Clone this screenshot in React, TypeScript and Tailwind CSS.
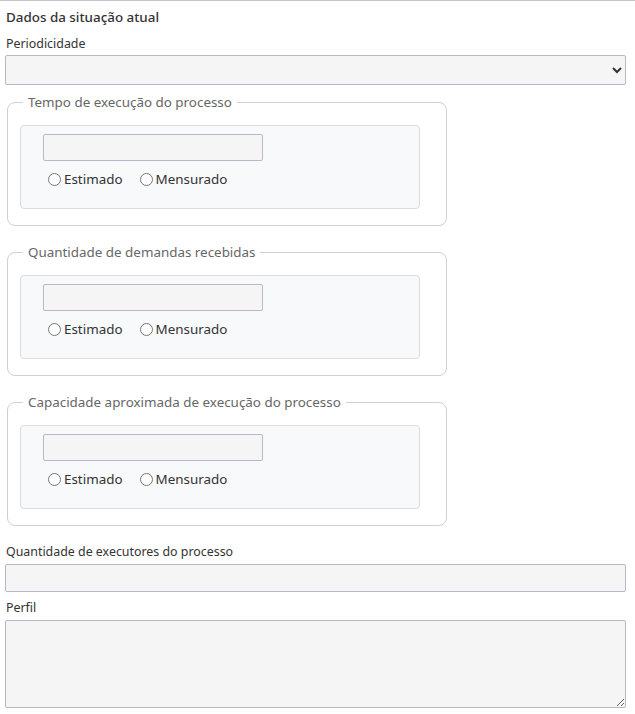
import React from 'react';

const grupos = [
  'Tempo de execução do processo',
  'Quantidade de demandas recebidas',
  'Capacidade aproximada de execução do processo',
];

const Grupo: React.FC<{ titulo: string; idx: number }> = ({ titulo, idx }) => {
  return (
    <fieldset className="ml-[7px] w-[440px] border border-[#cfcfd4] rounded-[8px] px-3 pt-[14px] pb-[16px] mt-[8px] mb-[17px]">
      <legend className="ml-[3px] px-[5px] text-[13.4px] leading-[18px] text-[#666]">{titulo}</legend>
      <div className="w-[400px] bg-[#f8f9fb] border border-[#dcdce0] rounded-[4px] pl-[22px] pt-[8px] pb-[20px]">
        <input type="text" className="block w-[220px] h-[27px] bg-[#f5f5f5] border border-[#b8b8c8] rounded-[2px]" />
        <div className="flex items-center mt-[9px] h-[18px] text-[13.4px] text-[#333]">
          <label className="flex items-center mr-[12px]">
            <input type="radio" name={'r' + idx} className="m-0 ml-[5px] mr-[3px] w-[13px] h-[13px]" />
            Estimado
          </label>
          <label className="flex items-center">
            <input type="radio" name={'r' + idx} className="m-0 ml-[5px] mr-[3px] w-[13px] h-[13px]" />
            Mensurado
          </label>
        </div>
      </div>
    </fieldset>
  );
};

export default function App() {
  return (
    <div className="w-[635px] min-h-[714px] bg-white border-t border-[#c4c4cc] text-[#333] font-['Noto_Sans',sans-serif]">
      <h3 className="px-[6px] pt-[6px] text-[13.4px] leading-[20px] font-medium text-[#333]">Dados da situação atual</h3>
      <label className="block px-[6px] mt-[8px] text-[12.4px] leading-[18px]">Periodicidade</label>
      <div className="px-[5px] mt-[2px]">
        <select className="block w-[621px] h-[30px] bg-[#f5f5f5] border border-[#b8b8c8] rounded-[2px] text-[13px]">
          <option></option>
        </select>
      </div>
      <div className="mt-[7px]">
        {grupos.map((g, i) => (
          <Grupo key={g} titulo={g} idx={i} />
        ))}
      </div>
      <label className="block px-[6px] mt-[1px] text-[12.4px] leading-[18px]">Quantidade de executores do processo</label>
      <div className="px-[5px] mt-[3px]">
        <input type="text" className="block w-[621px] h-[28px] bg-[#f5f5f5] border border-[#b8b8c8] rounded-[2px]" />
      </div>
      <label className="block px-[6px] mt-[7px] text-[12.4px] leading-[18px]">Perfil</label>
      <div className="px-[5px] mt-[3px]">
        <textarea className="block w-[621px] h-[88px] bg-[#f5f5f5] border border-[#b8b8c8] rounded-[2px]" />
      </div>
    </div>
  );
}
